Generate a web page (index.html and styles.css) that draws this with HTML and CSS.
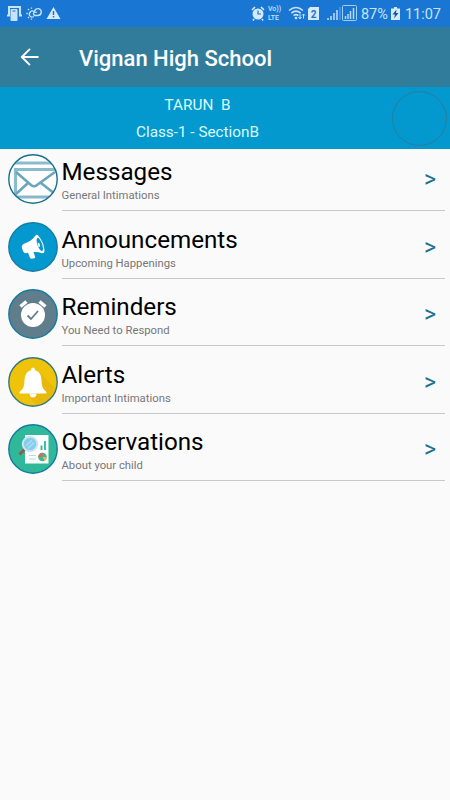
FILE: index.html
```html
<!DOCTYPE html>
<html lang="en">

<head>
    <meta charset="UTF-8">
    <meta name="viewport" content="width=device-width, initial-scale=1.0">
    <title>Vignan High School</title>
    <link rel="stylesheet" href="styles.css">
</head>

<body>
    <div class="statusbar">
        <svg class="status-left" width="66" height="27" viewBox="0 0 66 27">
            <path d="M9 15V7h11v8M7 15.5h3M19 15.5h3" fill="none" stroke="#c8e3fa" stroke-width="2" />
            <rect x="10.5" y="9" width="7" height="12" rx="1" fill="#c8e3fa" />
            <path d="M12.5 11h3" stroke="#1976d2" />
            <path d="M34 16.500q-3 1.500-4.300-.8T31 11.200q2-.8 3 .6M34.500 11.500q.8-3 4-2.800 3 .5 2.800 3.800-.6 3-3.500 3h-2.500q-2-.3-1.800-2.300.8-1.800 3.300-.8" fill="none" stroke="#c8e3fa" stroke-width="1.300" />
            <path d="M31.500 7.500v1.300M28 9l1 1M26.300 13.500h1.400M28 18l1-1M31.500 18.500v1.300" stroke="#c8e3fa" stroke-width="1.300" />
            <path d="M53.500 7L60.500 19H46.500Z" fill="#d5eafc" />
            <path d="M53.500 11v4M53.500 16v1.500" stroke="#1976d2" stroke-width="1.500" />
        </svg>
        <div class="status-right">
            <svg width="15" height="27" viewBox="0 0 15 27">
                <circle cx="7" cy="14" r="5.500" fill="#d5eafc" />
                <path d="M1 10l3-3M13 10l-3-3M3 19l-1 1.500M11 19l1 1.500" stroke="#d5eafc" stroke-width="1.600" />
                <path d="M7 10.500V14h3" fill="none" stroke="#1976d2" stroke-width="1.200" />
            </svg>
            <div class="volte"><span>Vo))</span><span>LTE</span></div>
            <svg class="wifi" width="68" height="27" viewBox="0 0 68 27">
                <path d="M1 10.500q7-6 14 0M3.300 13.200q4.700-4 9.400 0M5.600 15.700q2.400-2 4.800 0" fill="none" stroke="#c8e3fa" stroke-width="1.600" />
                <circle cx="8" cy="18" r="1.300" fill="#c8e3fa" />
                <path d="M12 14v4.500M10.500 17l1.500 2 1.500-2M15.500 18.500V14M14 15.500l1.500-1.500 1.500 1.500" fill="none" stroke="#c8e3fa" />
                <path d="M20 9l2-2h9v13H20Z" fill="#d5eafc" />
                <text class="sim" x="25.500" y="17.500" text-anchor="middle">2</text>
                <path d="M40 18v2M43 16v4M46 13v7M49 10v10" stroke="#b5d9f7" stroke-width="1.600" />
                <path d="M52 7v13" stroke="#4c98e2" stroke-width="1.500" />
                <rect x="54.500" y="5.500" width="14" height="15" rx="1" fill="none" stroke="#a4cff4" />
                <path d="M57.500 16v3M60 14v5M62.500 11v8M65.500 8v11" stroke="#b5d9f7" stroke-width="1.500" />
            </svg>
            <span class="battery-text">87%</span>
            <svg class="battery" width="9" height="27" viewBox="0 0 9 27">
                <path d="M3 7h3v1.500h3V20H0V8.500h3Z" fill="#d5eafc" />
                <path d="M5.500 9.500L1.500 14.500H4L3 18.500 7.500 13H5Z" fill="#14549a" />
            </svg>
            <span class="time">11:07</span>
        </div>
    </div>

    <div class="toolbar">
        <svg class="back" width="20" height="20" viewBox="0 0 20 20">
            <path d="M18.500 10H2M10 1.800L1.800 10 10 18.200" fill="none" stroke="#fff" stroke-width="1.900" />
        </svg>
        <h1>Vignan High School</h1>
    </div>

    <div class="student">
        <div class="student-info">
            <p>TARUN&nbsp; B</p>
            <p>Class-1 - SectionB</p>
        </div>
        <div class="photo"></div>
    </div>

    <div class="menu">
        <div class="item">
            <svg class="icon" viewBox="0 0 50 50">
                <clipPath id="round"><circle cx="25" cy="25" r="24" /></clipPath>
                <circle cx="25" cy="25" r="24" fill="#fff" />
                <g clip-path="url(#round)" fill="none">
                    <path d="M3 9H46M7.500 42V15.500H49" stroke="#8bbccd" stroke-width="3.200" />
                    <path d="M0 43H50" stroke="#8bb8c8" stroke-width="3" />
                    <path d="M8 18L23 31q3 2.500 6 0L47 18M8 40L20 29M47 40L33 29" stroke="#6ba5bb" stroke-width="2.600" />
                </g>
                <circle cx="25" cy="25" r="24.200" fill="none" stroke="#156f92" stroke-width="1.400" />
            </svg>
            <div class="text">
                <h2>Messages</h2>
                <p>General Intimations</p>
                <span class="arrow">&gt;</span>
            </div>
        </div>
        <div class="item">
            <svg class="icon" viewBox="0 0 50 50">
                <circle cx="25" cy="25" r="24.200" fill="#0399ce" stroke="#167ea5" stroke-width="1.400" />
                <path d="M14 26q-1-3 2-4.200C21 20 25 17.500 27.500 13.500q1.500-1.500 3 .5Q36 20 36.500 29q0 2.500-2.500 2.200Q30 29.500 25.500 30l1.500 4.500q.5 1.500-1 1.800l-2 .5q-1.500.2-2-1l-2-5-2.500.5Q15 31 14 26Z" fill="#fff" />
                <ellipse cx="31.800" cy="22.500" rx="2.300" ry="7" transform="rotate(-20 31.800 22.500)" fill="#0399ce" />
                <path d="M29.500 20.500q3 .5 2.500 4l-1.500.5Z" fill="#fff" />
            </svg>
            <div class="text">
                <h2>Announcements</h2>
                <p>Upcoming Happenings</p>
                <span class="arrow">&gt;</span>
            </div>
        </div>
        <div class="item">
            <svg class="icon" viewBox="0 0 50 50">
                <circle cx="25" cy="25" r="24.200" fill="#607d8b" stroke="#167b9f" stroke-width="1.400" />
                <circle cx="25" cy="26" r="12" fill="#fff" />
                <path d="M12.500 17.500l6-5M37.500 17.500l-6-5" stroke="#fff" stroke-width="3.500" />
                <path d="M19.500 26.500l3.500 3.500 7-8" fill="none" stroke="#607d8b" stroke-width="1.800" />
            </svg>
            <div class="text">
                <h2>Reminders</h2>
                <p>You Need to Respond</p>
                <span class="arrow">&gt;</span>
            </div>
        </div>
        <div class="item">
            <svg class="icon" viewBox="0 0 50 50">
                <circle cx="25" cy="25" r="24" fill="#efc30a" />
                <path d="M31 15L47 31Q43 44 29 48.500L20 38Z" fill="#e6b90a" />
                <path d="M25 10.500q2 0 2 2.700 6.500 1.500 6.500 9.800 0 8 3.500 10.500 2 1.500 1.500 3H11.500q-.5-1.500 1.500-3 3.500-2.500 3.500-10.500 0-8.300 6.500-9.800 0-2.700 2-2.700Z" fill="#fff" />
                <path d="M21.500 36.500h7q0 4-3.500 4t-3.500-4Z" fill="#fff" />
                <circle cx="25" cy="25" r="24.200" fill="none" stroke="#32777a" stroke-width="1.400" />
            </svg>
            <div class="text">
                <h2>Alerts</h2>
                <p>Important Intimations</p>
                <span class="arrow">&gt;</span>
            </div>
        </div>
        <div class="item">
            <svg class="icon" viewBox="0 0 50 50">
                <circle cx="25" cy="25" r="24.200" fill="#2fb99a" stroke="#167b9f" stroke-width="1.400" />
                <rect x="17" y="11" width="23.500" height="28.500" fill="#fbfdfd" />
                <path d="M21 31.500h7M21 35h7" stroke="#c9d3dc" stroke-width="1" />
                <path d="M33.500 26V21.500M37 26V17" stroke="#32b3a0" stroke-width="1.800" />
                <circle cx="34.500" cy="33" r="4.300" fill="#36b7a4" />
                <path d="M34.500 33V28.700A4.300 4.300 0 0 0 30.200 33Z" fill="#dd6b4a" />
                <path d="M34.500 33H38.800A4.300 4.300 0 0 1 36.500 36.800Z" fill="#f0b93a" />
                <path d="M16.500 25.500l-5 5" stroke="#925b45" stroke-width="3" />
                <circle cx="22" cy="20" r="7.200" fill="#83ceed" stroke="#cfe4ec" stroke-width="2" />
                <path d="M18 22l6-6M20 24.500l6-6" stroke="#a9dff5" stroke-width="1.500" />
            </svg>
            <div class="text">
                <h2>Observations</h2>
                <p>About your child</p>
                <span class="arrow">&gt;</span>
            </div>
        </div>
    </div>
</body>

</html>
```
FILE: styles.css
```css
body {
    margin: 0;
    background-color: #fafafa;
    font-family: Roboto, sans-serif;
    color: #000000;
}

h1, h2, p {
    margin: 0;
    font-weight: 400;
}

svg {
    display: block;
    flex-shrink: 0;
}

.statusbar {
    display: flex;
    justify-content: space-between;
    height: 27px;
    background-color: #1976d2;
    color: #c8e3fa;
}

.status-right {
    display: flex;
    align-items: center;
    padding-right: 9px;
}

.volte {
    display: flex;
    flex-direction: column;
    width: 15px;
    margin-left: 2px;
    font-size: 7px;
    line-height: 9px;
    font-weight: 500;
    white-space: nowrap;
}

.wifi {
    margin-left: 5px;
    overflow: visible;
}

.sim {
    font-size: 10px;
    font-weight: 700;
    fill: #1976d2;
}

.battery-text, .time {
    font-size: 14.5px;
    line-height: 27px;
    padding-top: 1px;
}

.battery-text {
    margin-left: 5px;
    width: 27px;
}

.battery {
    margin-left: 3px;
}

.time {
    margin-left: 5px;
}

.toolbar {
    display: flex;
    align-items: center;
    height: 60px;
    padding-left: 20px;
    background-color: #327c9b;
    color: #ffffff;
}

.toolbar h1 {
    margin-left: 39px;
    padding-top: 2px;
    font-size: 22px;
    font-weight: 500;
}

.student {
    display: flex;
    align-items: center;
    height: 62px;
    padding-right: 3px;
    background-color: #0399ce;
}

.student-info {
    flex: 1;
    padding-top: 2px;
    padding-left: 3px;
    text-align: center;
    font-size: 15.3px;
    line-height: 27px;
    color: #d9fbff;
}

.photo {
    box-sizing: border-box;
    width: 55px;
    height: 55px;
    border: 1px solid #2a7c9c;
    border-radius: 50%;
}

.item {
    display: flex;
    box-sizing: border-box;
    height: 67.5px;
    padding: 5px 5px 5px 7.5px;
}

.icon {
    width: 50px;
    height: 50px;
}

.text {
    display: grid;
    grid-template-columns: 1fr auto;
    grid-template-rows: 35px 21px;
    box-sizing: border-box;
    flex: 1;
    height: 57px;
    margin-left: 4px;
    border-bottom: 1px solid #c8c8c8;
}

.text h2 {
    font-size: 24.2px;
    line-height: 37px;
}

.text p {
    grid-row: 2;
    font-size: 11.3px;
    line-height: 14px;
    color: #777777;
}

.arrow {
    grid-column: 2;
    grid-row: 1 / 3;
    padding: 12px 9px 0 0;
    font-size: 23px;
    line-height: 28px;
    font-weight: 400;
    color: #1c7191;
}
```
